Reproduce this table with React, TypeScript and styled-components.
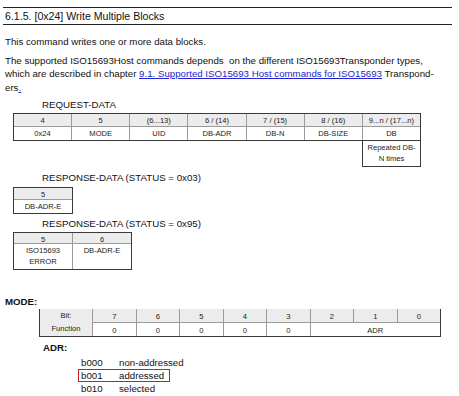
import styled, { createGlobalStyle } from "styled-components";

const GlobalStyle = createGlobalStyle`
  html, body {
    margin: 0;
    background: #fff;
  }
  body {
    font-family: "Liberation Sans", Arial, sans-serif;
    color: #111;
  }
`;

// page frame
const Page = styled.div`
  width: 459px;
  height: 396px;
  box-sizing: border-box;
  padding: 7px 7px 0 3px;
  overflow: hidden;
`;

const Heading = styled.h3`
  margin: 0;
  height: 16px;
  line-height: 16px;
  padding-left: 2px;
  border-top: 1px solid #222;
  border-bottom: 1px solid #222;
  font-size: 10.6px;
  font-weight: normal;
`;

const Para = styled.p<{ $mt: number }>`
  margin: ${(p) => p.$mt}px 0 0 2px;
  font-size: 9.7px;
  line-height: 13.5px;
  white-space: nowrap;
`;

const Link = styled.a`
  color: #2323d2;
  text-decoration: underline;
`;

const Caption = styled.div<{ $mt: number; $indent?: number; $bold?: boolean }>`
  margin: ${(p) => p.$mt}px 0 0 ${(p) => p.$indent ?? 39}px;
  font-size: 9.7px;
  line-height: 14px;
  font-weight: ${(p) => (p.$bold ? "bold" : "normal")};
`;

// table parts
const TableWrap = styled.div<{ $mt: number; $left: number; $width: number }>`
  display: flex;
  flex-direction: column;
  margin: ${(p) => p.$mt}px 0 0 ${(p) => p.$left}px;
  width: ${(p) => p.$width}px;
`;

const Grid = styled.div<{ $cols: string; $rows: string; $noTop?: boolean }>`
  display: grid;
  grid-template-columns: ${(p) => p.$cols};
  grid-template-rows: ${(p) => p.$rows};
  gap: 1px;
  background: #9a9a9a;
  border: 1px solid #3a3a3a;
  ${(p) => (p.$noTop ? "border-top: none;" : "")}
`;

const Cell = styled.div<{ $head?: boolean; $span?: number; $rowSpan?: number }>`
  background: ${(p) => (p.$head ? "#ececec" : "#fff")};
  font-size: 7.6px;
  line-height: 11px;
  text-align: center;
  color: #222;
  padding-top: 1px;
  ${(p) => (p.$span ? `grid-column: span ${p.$span};` : "")}
  ${(p) => (p.$rowSpan ? `grid-row: span ${p.$rowSpan};` : "")}
`;

const ExtraCell = styled.div`
  align-self: flex-end;
  width: 57px;
  height: 24px;
  border: 1px solid #3a3a3a;
  border-top: none;
  font-size: 7.6px;
  line-height: 11px;
  text-align: center;
  color: #222;
  padding-top: 1px;
  box-sizing: content-box;
`;

const ModeCell = styled(Cell)`
  padding-top: 1.5px;
`;

const FnCell = styled(Cell)`
  display: flex;
  flex-direction: column;
  justify-content: space-around;
  padding: 1px 0;
  line-height: 12px;
`;

// ADR list
const List = styled.div`
  margin-top: 0.5px;
  display: flex;
  flex-direction: column;
`;

const ListRow = styled.div<{ $marked?: boolean }>`
  display: flex;
  box-sizing: border-box;
  width: 92px;
  height: 13px;
  margin-left: 75px;
  padding-left: 2px;
  border: 1px solid ${(p) => (p.$marked ? "#c62020" : "transparent")};
  font-size: 9.7px;
  line-height: 11px;
  white-space: nowrap;
  overflow: visible;
`;

const Code = styled.span`
  width: 38px;
  flex: none;
`;

const reqHead = ["4", "5", "(6...13)", "6 / (14)", "7 / (15)", "8 / (16)", "9...n / (17...n)"];
const reqBody = ["0x24", "MODE", "UID", "DB-ADR", "DB-N", "DB-SIZE", "DB"];
const bits = ["7", "6", "5", "4", "3", "2", "1", "0"];
const adr = [
  { code: "b000", label: "non-addressed" },
  { code: "b001", label: "addressed", marked: true },
  { code: "b010", label: "selected" },
];

export default function App() {
  return (
    <>
      <GlobalStyle />
      <Page>
        <Heading>6.1.5. [0x24] Write Multiple Blocks</Heading>
        <Para $mt={10}>This command writes one or more data blocks.</Para>
        <Para $mt={5}>
          The supported ISO15693Host commands depends&nbsp; on the different ISO15693Transponder types,
          <br />
          which are described in chapter{" "}
          <Link href="#">9.1. Supported ISO15693 Host commands for ISO15693</Link> Transpond-
          <br />
          ers<Link href="#">.</Link>
        </Para>

        <Caption $mt={4}>REQUEST-DATA</Caption>
        <TableWrap $mt={1} $left={10} $width={408}>
          <Grid $cols="repeat(7, 1fr)" $rows="12px 13px">
            {reqHead.map((h) => (
              <Cell key={h} $head>
                {h}
              </Cell>
            ))}
            {reqBody.map((b) => (
              <Cell key={b}>{b}</Cell>
            ))}
          </Grid>
          <ExtraCell>
            Repeated DB-
            <br />N times
          </ExtraCell>
        </TableWrap>

        <Caption $mt={4}>RESPONSE-DATA (STATUS = 0x03)</Caption>
        <TableWrap $mt={2} $left={10} $width={60}>
          <Grid $cols="1fr" $rows="11px 13px">
            <Cell $head>5</Cell>
            <Cell>DB-ADR-E</Cell>
          </Grid>
        </TableWrap>

        <Caption $mt={3}>RESPONSE-DATA (STATUS = 0x95)</Caption>
        <TableWrap $mt={1} $left={10} $width={119}>
          <Grid $cols="1fr 1fr" $rows="10px 25px">
            <Cell $head>5</Cell>
            <Cell $head>6</Cell>
            <Cell>
              ISO15693
              <br />
              ERROR
            </Cell>
            <Cell>DB-ADR-E</Cell>
          </Grid>
        </TableWrap>

        <Caption $mt={25} $indent={2} $bold>
          MODE:
        </Caption>
        <TableWrap $mt={0} $left={36} $width={402}>
          <Grid $cols="52px repeat(8, 1fr)" $rows="13px 13px" $noTop>
            <FnCell $head $rowSpan={2}>
              <span>Bit:</span>
              <span>Function</span>
            </FnCell>
            {bits.map((b) => (
              <ModeCell key={b} $head>
                {b}
              </ModeCell>
            ))}
            {bits.slice(0, 5).map((b) => (
              <ModeCell key={"f" + b}>0</ModeCell>
            ))}
            <ModeCell $span={3}>ADR</ModeCell>
          </Grid>
        </TableWrap>

        <Caption $mt={4} $indent={40} $bold>
          ADR:
        </Caption>
        <List>
          {adr.map((a) => (
            <ListRow key={a.code} $marked={a.marked}>
              <Code>{a.code}</Code>
              <span>{a.label}</span>
            </ListRow>
          ))}
        </List>
      </Page>
    </>
  );
}
